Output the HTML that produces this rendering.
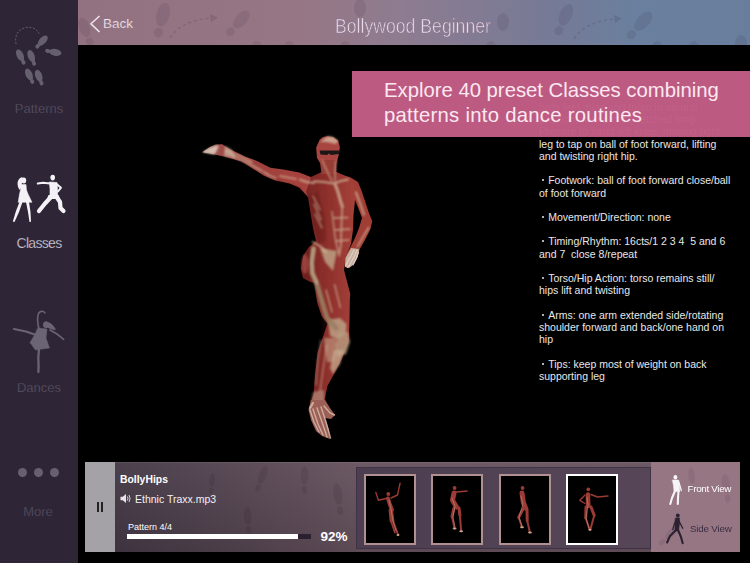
<!DOCTYPE html>
<html><head><meta charset="utf-8">
<style>
*{margin:0;padding:0;box-sizing:border-box}
html,body{width:750px;height:563px;overflow:hidden;background:#000;font-family:"Liberation Sans",sans-serif}
.abs{position:absolute}
#side{left:0;top:0;width:78px;height:563px;background:#2e2536}
.lbl{position:absolute;left:0;width:78px;text-align:center;font-size:13px;color:#5c5566;white-space:nowrap;-webkit-text-stroke:0.25px #2e2536}
#hdr{left:78px;top:0;width:672px;height:45px;overflow:hidden;background:linear-gradient(90deg,rgb(146,114,129) 0%,rgb(150,118,132) 33%,rgb(142,124,144) 48%,rgb(118,122,150) 70%,rgb(106,128,158) 83%,rgb(104,126,156) 100%)}
#banner{left:352px;top:71px;width:398px;height:66px;background:rgba(193,92,133,0.975)}
.bt{position:absolute;left:32px;font-size:20.3px;color:#fde8f0;white-space:nowrap}
#desc{left:539px;top:0;width:211px;font-size:10.5px;color:#e8e8e8}
.dl{position:absolute;left:0;white-space:nowrap}
.bu{display:inline-block;width:2.2px;height:2.2px;border-radius:1px;background:#e8e8e8;margin:0 4px 0 3px;vertical-align:3px}
#panel{left:85px;top:462px;width:655px;height:90px;background:linear-gradient(180deg,rgba(255,255,255,0.04),rgba(0,0,0,0.1)),linear-gradient(90deg,rgb(68,57,70) 4.6%,rgb(86,70,82) 25.2%,rgb(102,82,94) 41.4%,rgb(102,82,94) 100%)}
#pause{left:0;top:0;width:30px;height:90px;background:rgb(164,162,166)}
#strip{left:271px;top:5px;width:295px;height:82px;background:linear-gradient(90deg,rgb(76,62,80),rgb(86,70,88));border:1px solid #3e3244}
.th{position:absolute;top:6px;width:52px;height:71px;background:#000;border:2px solid #b09090}
#rp{left:566px;top:0;width:89px;height:90px;background:rgb(151,118,131)}
</style></head><body>
<div id="side" class="abs"><svg class="abs" style="left:0;top:0" width="78" height="563" viewBox="0 0 78 563"><g fill="#66606e"><g transform="translate(20.9,57) rotate(-25.7) scale(1.0)"><ellipse cx="0" cy="-2" rx="3.4" ry="6.2"/><path d="M-1.6,3 L1.6,3 L1.4,5.5 L-1.4,5.5 Z"/><ellipse cx="0" cy="6" rx="2" ry="2.2"/></g><g transform="translate(31.9,57.9) rotate(-21.4) scale(1.0)"><ellipse cx="0" cy="-2" rx="3.4" ry="6.2"/><path d="M-1.6,3 L1.6,3 L1.4,5.5 L-1.4,5.5 Z"/><ellipse cx="0" cy="6" rx="2" ry="2.2"/></g><g transform="translate(29.75,76.2) rotate(-24.3) scale(1.0)"><ellipse cx="0" cy="-2" rx="3.4" ry="6.2"/><path d="M-1.6,3 L1.6,3 L1.4,5.5 L-1.4,5.5 Z"/><ellipse cx="0" cy="6" rx="2" ry="2.2"/></g><g transform="translate(39.4,77.6) rotate(-20.9) scale(1.0)"><ellipse cx="0" cy="-2" rx="3.4" ry="6.2"/><path d="M-1.6,3 L1.6,3 L1.4,5.5 L-1.4,5.5 Z"/><ellipse cx="0" cy="6" rx="2" ry="2.2"/></g><g transform="translate(41.5,42) rotate(42.9) scale(1.0)"><ellipse cx="0" cy="-2" rx="3.4" ry="6.2"/><path d="M-1.6,3 L1.6,3 L1.4,5.5 L-1.4,5.5 Z"/><ellipse cx="0" cy="6" rx="2" ry="2.2"/></g><g transform="translate(53.25,52) rotate(100.6) scale(1.0)"><ellipse cx="0" cy="-2" rx="3.4" ry="6.2"/><path d="M-1.6,3 L1.6,3 L1.4,5.5 L-1.4,5.5 Z"/><ellipse cx="0" cy="6" rx="2" ry="2.2"/></g></g><path d="M16.2,44.2 C14,36 18,29 26.1,27.5 C32,26.5 37,29 39.2,33.7" fill="none" stroke="#66606e" stroke-width="1" stroke-dasharray="2 1.6"/><g fill="#f4f2f6" stroke="#f4f2f6" stroke-linecap="round" stroke-linejoin="round">
<ellipse cx="23.8" cy="180.5" rx="2.4" ry="3" stroke="none"/>
<path stroke="none" d="M22.5,177 C19.5,177.5 18,180 17.6,182.5 C17.3,185 18.2,188 19.5,190 L21.5,187 L22,182 Z"/>
<path stroke-width="0.5" d="M21,184.5 L26,184.5 L26.5,190 L28,194 L32,202.3 L18.2,202.3 L19.5,194 L20.5,190 Z"/>
<path stroke="none" d="M19.5,202 L22.5,202 L19,212 L14.5,222 L12.8,221.5 L16,211 Z"/>
<path stroke="none" d="M26,202 L29,202 L30.5,212 L31,221.8 L29.5,222 L28,212 Z"/>
<ellipse cx="52.7" cy="177.6" rx="2.3" ry="2.8" stroke="none"/>
<path stroke-width="0.6" d="M49.5,182 L57,182.5 L57.5,189 L57.5,196.5 L50,196.5 L50,189 Z"/>
<path stroke-width="2" fill="none" d="M50,183.5 L43,182.8 L37.8,183.5 M56.5,184 L61,187.7 L58,191.5"/>
<path stroke-width="4.2" fill="none" d="M52,196 L45,203.5 L39,211 M56,196 L60,202 L60.5,208 L63.5,211"/><path stroke="none" d="M48.5,195 L58.5,195 L60,199 L47,199 Z"/>
</g><g fill="#6a6474" stroke="#6a6474" stroke-linecap="round" stroke-linejoin="round">
<path fill="none" stroke-width="1.6" d="M44.9,312.8 C43,310.5 40,311 38.5,313.5 C37,317 37.5,323 39.1,329.6"/>
<ellipse cx="46" cy="324.8" rx="3" ry="3.3" stroke="none"/>
<path stroke="none" d="M45,321.5 C50,322 54,325 56,330 C52,330 49,328 46,327 Z"/>
<path fill="none" stroke-width="1.6" d="M50,330 L57,334 L63.7,339.3"/>
<path fill="none" stroke-width="2.2" d="M36,335 L26,331.5 L14,329"/>
<path stroke-width="0.5" d="M38,328 L47,329 L46,338 L49.5,348 L42,349 L35.5,350 L30,342.6 L34,336 Z"/>
<path fill="none" stroke-width="2.3" d="M39,348 L38.3,358 L38.6,366 L38.4,372"/>
</g></svg>
  <div class="lbl" style="top:101px">Patterns</div>
  <div class="lbl" style="top:235px;color:#dcd8e0;font-size:14px;letter-spacing:-0.7px">Classes</div>
  <div class="lbl" style="top:380px">Dances</div>
  <div class="lbl" style="top:504px;left:-1px;color:#5a5264">More</div>
  <div class="abs" style="left:18px;top:468px;width:9px;height:9px;border-radius:50%;background:#686070"></div>
  <div class="abs" style="left:34px;top:468px;width:9px;height:9px;border-radius:50%;background:#686070"></div>
  <div class="abs" style="left:50px;top:468px;width:9px;height:9px;border-radius:50%;background:#686070"></div>
</div>
<div id="hdr" class="abs"><svg class="abs" style="left:-78px;top:0" width="750" height="45" viewBox="0 0 750 45"><g fill="rgba(30,10,40,0.09)"><g transform="translate(161.5,20.5) rotate(14.4) scale(1.000)"><ellipse cx="0" cy="-6" rx="6.5" ry="12"/><ellipse cx="0" cy="12.5" rx="4.5" ry="5"/></g><g transform="translate(237.8,23.5) rotate(41) scale(0.889)"><ellipse cx="0" cy="-6" rx="6.5" ry="12"/><ellipse cx="0" cy="12.5" rx="4.5" ry="5"/></g><g transform="translate(563.6,20) rotate(24.2) scale(0.944)"><ellipse cx="0" cy="-6" rx="6.5" ry="12"/><ellipse cx="0" cy="12.5" rx="4.5" ry="5"/></g><g transform="translate(639.4,25.5) rotate(41.4) scale(0.972)"><ellipse cx="0" cy="-6" rx="6.5" ry="12"/><ellipse cx="0" cy="12.5" rx="4.5" ry="5"/></g><g transform="translate(86,32) rotate(-20) scale(0.833)"><ellipse cx="0" cy="-6" rx="6.5" ry="12"/><ellipse cx="0" cy="12.5" rx="4.5" ry="5"/></g><ellipse cx="257" cy="50" rx="6" ry="9"/><ellipse cx="289" cy="50" rx="6" ry="9"/><ellipse cx="345" cy="50" rx="6" ry="9"/><ellipse cx="491" cy="50" rx="6" ry="9"/><ellipse cx="657" cy="50" rx="6" ry="9"/><ellipse cx="694" cy="50" rx="6" ry="9"/><ellipse cx="741" cy="44" rx="6" ry="9"/><ellipse cx="360" cy="8" rx="6" ry="9"/><ellipse cx="503" cy="22" rx="6" ry="9"/></g><g fill="none" stroke="rgba(30,10,40,0.12)" stroke-width="1.6" stroke-dasharray="3 3"><path d="M170,38 Q182,20 212,18"/><path d="M574,38.7 Q586,21 616,19"/></g><g fill="rgba(30,10,40,0.12)"><path d="M210,14 L218,17.6 L211,22 Z"/><path d="M614,15 L622,18.6 L615,23 Z"/></g></svg>
  <svg class="abs" style="left:12px;top:15px" width="12" height="18"><path d="M9.5 1 L1 8.8 L9.5 17" fill="none" stroke="#f2e4ec" stroke-width="1.5"/></svg>
  <div class="abs" style="left:25px;top:16px;font-size:13.5px;color:#f6eaf0;-webkit-text-stroke:0.2px #927080">Back</div>
  <div class="abs" style="left:257px;top:14px;font-size:21px;color:#eadcea;transform:scaleX(0.84);transform-origin:0 0;white-space:nowrap;-webkit-text-stroke:0.6px #86728a">Bollywood Beginner</div>
</div>

<svg id="fig" class="abs" style="left:0;top:0" width="750" height="563" viewBox="0 0 750 563">
<defs>
<filter id="soft" x="-10%" y="-10%" width="120%" height="120%"><feGaussianBlur stdDeviation="0.6"/></filter>
<filter id="soft3" x="-10%" y="-10%" width="120%" height="120%"><feGaussianBlur stdDeviation="0.8"/></filter>
<filter id="soft2" x="-20%" y="-20%" width="140%" height="140%"><feGaussianBlur stdDeviation="1.1"/></filter>
<linearGradient id="gArm" x1="202" y1="0" x2="320" y2="0" gradientUnits="userSpaceOnUse"><stop offset="0" stop-color="#c8b0a4"/><stop offset="0.12" stop-color="#a0504c"/><stop offset="0.3" stop-color="#98403c"/><stop offset="0.7" stop-color="#a4423c"/><stop offset="1" stop-color="#a8443e"/></linearGradient>
<linearGradient id="gTorso" x1="300" y1="0" x2="356" y2="0" gradientUnits="userSpaceOnUse"><stop offset="0" stop-color="#742422"/><stop offset="0.5" stop-color="#8e302c"/><stop offset="1" stop-color="#a6423a"/></linearGradient>
</defs>
<g filter="url(#soft)">
<!-- left arm -->
<path fill="url(#gArm)" d="M202.4,152.3 L210,147 L216,144.6 L222.4,144.3 L228.8,148.6 L244.8,156.6 L256,160.6 L270.4,167.8 L283.2,169.4 L299.2,172.6 L312,177.4 L322,176 L318,198 L308,197 L299.2,187.5 L289.6,183.5 L275.2,180.6 L264,175.8 L241.6,161.4 L224,156.6 L209.6,153.4 Z"/>
<!-- right arm -->
<path fill="#a03c36" d="M346,176 L350.7,177.6 L358,182 L362,192 L369,213.3 L372.3,221.3 L370.3,229.3 L365,240 L359.7,249.3 L357,258.7 L351,266.7 L346.3,268 L345,265.3 L345.7,256 L350,248 L355,238 L359,228 L362,218 L359,210 L355,200 L350,198 Z"/>
<!-- torso + legs -->

<path fill="url(#gTorso)" d="M321.6,172 L336.3,172 L346,176 L352,180 L356,192 L355,200 L353.5,215 L353,230 L351,244 L346,257.3 L344,270 L350.3,294 L349.8,300 L349.5,320 L348.9,341 L342,358.6 L334,374 L327.4,386 L323.5,405 L310,404 L313.7,393.8 L315,375 L317.6,352.8 L323.5,335.2 L327.4,323.5 L321.6,316 L317,302 L314.4,282.7 L310.4,282 L303,278 L300.8,268.4 L303,256 L309,247 L316,241 L313,228 L308,197 L306,192 L311,177 Z"/>
<path fill="#c8b0a0" d="M351,248 L359,249 L358,256 L354,264 L349,268 L345,266.5 L345.5,258 Z"/>
<g fill="none" stroke="#e0d0c4" stroke-linecap="round" stroke-width="1.1">
<path d="M357,250 L354,257 L350.5,263.5 L347.5,267.5 M354,250 L350.5,257 L347.5,262 L345.5,266 M358.5,252 L356.5,258 L353,265"/>
</g>
<!-- head -->
<path fill="#a84440" d="M327.5,136.3 L333,137 L338.2,140.7 L339.8,147 L339.2,152.5 L338,158 L336.3,163.2 L332,166.5 L328.4,167.6 L323,165.5 L319.6,162.2 L317,158 L316.7,154.4 L316.2,147.6 L319.6,139.8 L323,137 Z"/>
<path fill="#983c36" d="M319.6,160 L336.3,160 L336.3,174 L321.6,174 Z"/>
</g>
<g filter="url(#soft2)" fill="#501010" opacity="0.28">
<path d="M308,196 L318,192 L324,215 L326,240 L318,246 L313,228 Z"/>
<path d="M264,175.8 L275.2,180.6 L289.6,183.5 L299.2,187.5 L308,197 L300,190 L285,182 L270,176 Z"/>
<path d="M301,265 L306,252 L312,246 L314,270 L312,282 L303,278 Z"/>
<path d="M317,302 L321.6,316 L327.4,323.5 L323.5,335.2 L317.6,352.8 L315,375 L313.7,393.8 L318,380 L322,345 L322,320 Z"/>
</g>
<g filter="url(#soft2)">
<!-- tan shapes -->
<path fill="#bca084" opacity="0.85" d="M320,248 L337,251 L333,271 L325,262 Z"/>
<path fill="#d4c0b0" d="M202.4,152.3 L210,148 L216,145.5 L219,146 L216,152 L214,154.4 L209.6,153.4 Z"/><path fill="#c8aa98" opacity="0.8" d="M225,146 L232,150 L236,158 L229,157 L224,156 Z"/>

<path fill="#d4b8a0" opacity="0.8" d="M320,142 L327.5,136.3 L333,137 L338.2,140.7 L336,144 L327,142 Z"/>
</g>
<g filter="url(#soft2)">
<path fill="#bca084" opacity="0.85" d="M328,320 L340,318 L346.5,324 L346,334 L338,339 L330,336 Z"/>
<path fill="#b89c80" opacity="0.8" d="M338,333 L348,332 L350,342 L346,354 L338,357 L336,345 Z"/>
<path fill="#c4a48a" opacity="0.6" d="M324,338 L336,338 L338,350 L334,362 L327,362 L325,350 Z"/>
<path fill="#c6ac90" opacity="0.75" d="M334,350 L344,350 L340,364 L333,374 L330,368 Z"/>
<path fill="#c0a08c" opacity="0.6" d="M313,392 L324,390 L324.5,403 L311,403 Z"/>
</g>
<g fill="none" stroke="#d0b69a" stroke-linecap="round" stroke-linejoin="round" opacity="0.8" filter="url(#soft3)">
<path stroke-width="2" d="M314.4,181.2 L324,182 L333.6,183.6 L341,181 L348,179.6"/>
<path stroke-width="1.3" d="M322,160 L327,171 L332,181 M336,161 L335,172 L335,181"/>
<path stroke-width="3" d="M335.2,184.4 L338,192 L340.8,202 L342.4,206.8"/>
<path stroke-width="1.6" d="M342.2,207 L341.5,225 L341,245 L339,256"/>
<path stroke-width="1.3" d="M334,218 L348,217.5 M335,230 L350,229 M336,241 L349,240"/>
<path stroke-width="1.3" d="M332,211.5 L335,237 L338.4,253"/>
<path stroke-width="1.2" d="M313,196 L320,210 M314,204 L321,220 M315,214 L322,228"/>
<path stroke-width="2" d="M312.8,242 L320.8,246.7 L326,252"/>
<path stroke-width="2" d="M356,192.4 L360,203 L364,214.7"/>
<path stroke-width="1.6" d="M368.7,227.5 L363,237 L357.5,246.7"/>

<path stroke-width="1" d="M321,340 L318,360 L316,385 M327,345 L323,370 L320,392"/>

<path stroke-width="2" d="M300,179.6 L306.4,182 L314,183"/>
<path stroke-width="1.3" d="M334.6,284.6 L340.4,307.7 M326,290 L332,312"/>
<path stroke-width="1.6" d="M226,151 L240,156 L252,162 M232,156 L248,163 L262,171 M264,172 L270,176 L276,178 M280,176 L296,179"/>
</g>
<path fill="none" stroke="#9a7e62" stroke-width="5" stroke-linecap="round" opacity="0.9" filter="url(#soft2)" d="M313.5,249 L311.5,262 L312,273 L317,284 L321,298 L327,318 L336,328"/>
<path fill="none" stroke="#c4aa8c" stroke-width="3" stroke-linecap="round" opacity="0.75" filter="url(#soft2)" d="M313.5,248 L311.8,262 L312.5,273 L317,283"/>
<ellipse cx="305" cy="264" rx="3.5" ry="10" fill="#d06a60" opacity="0.45" filter="url(#soft2)"/>
<!-- sunglasses -->
<path fill="#1e1616" filter="url(#soft)" d="M319.6,150.5 L339.2,150.5 L339,154 L331,155 L329,153.5 L327,155 L320.5,154.5 Z"/>
<!-- foot -->
<g filter="url(#soft)">
<path fill="#9c5e56" d="M311,400 L308.5,409.8 L311,420 L316,431 L322,436 L330,439 L329,430 L325,418 L331,419 L335,415 L330,408 L325,400 Z"/>
<g fill="none" stroke="#d8c0b0" stroke-linecap="round" opacity="0.8">
<path stroke-width="1.4" d="M310,410 L314,422 L319,432 M313,409 L318,424 L323,435 M317,408 L322,422 L327,437 M321,407 L326,422 L330.5,438 M324,406 L330,413 L334.5,415"/>
<path stroke-width="2.2" d="M310,408 L313,403"/>
</g></g>
</svg>
<div id="desc" class="abs">
  <div class="dl" style="top:101px">both feet, hips and torso in neutral</div>
  <div class="dl" style="top:113px">position, with arms stretched long.</div>
  <div class="dl" style="top:125px">Prepare to bend left knee, moving right</div>
  <div class="dl" style="top:138px">leg to tap on ball of foot forward, lifting</div>
  <div class="dl" style="top:150px">and twisting right hip.</div>
  <div class="dl" style="top:174px"><i class="bu"></i>Footwork: ball of foot forward close/ball</div>
  <div class="dl" style="top:187px">of foot forward</div>
  <div class="dl" style="top:211px"><i class="bu"></i>Movement/Direction: none</div>
  <div class="dl" style="top:235px"><i class="bu"></i>Timing/Rhythm: 16cts/1 2 3 4&nbsp; 5 and 6</div>
  <div class="dl" style="top:248px">and 7&nbsp; close 8/repeat</div>
  <div class="dl" style="top:272px"><i class="bu"></i>Torso/Hip Action: torso remains still/</div>
  <div class="dl" style="top:284px">hips lift and twisting</div>
  <div class="dl" style="top:309px"><i class="bu"></i>Arms: one arm extended side/rotating</div>
  <div class="dl" style="top:321px">shoulder forward and back/one hand on</div>
  <div class="dl" style="top:333px">hip</div>
  <div class="dl" style="top:358px"><i class="bu"></i>Tips: keep most of weight on back</div>
  <div class="dl" style="top:370px">supporting leg</div>
</div>

<div id="banner" class="abs">
  <div class="bt" style="top:8px">Explore 40 preset Classes combining</div>
  <div class="bt" style="top:33px;letter-spacing:0.28px">patterns into dance routines</div>
</div>

<div id="panel" class="abs">
  <div class="abs" style="left:0;top:0;width:655px;height:1px;background:rgba(255,255,255,0.08)"></div>
  <div id="pause" class="abs">
    <div class="abs" style="left:12px;top:40px;width:2px;height:10px;background:#222"></div>
    <div class="abs" style="left:16px;top:40px;width:2px;height:10px;background:#222"></div>
  </div>
  <div class="abs" style="left:35px;top:11.5px;font-size:10.4px;font-weight:bold;color:#fff">BollyHips</div>
  <svg class="abs" style="left:34.5px;top:30.5px" width="12" height="11" viewBox="0 0 13 12"><path d="M0.5,4 L3,4 L6.5,1 L6.5,11 L3,8 L0.5,8 Z" fill="#e8e4ea"/><path d="M8,3.8 Q9.3,6 8,8.2 M9.8,2.2 Q12,6 9.8,9.8" fill="none" stroke="#e8e4ea" stroke-width="1"/></svg>
  <div class="abs" style="left:50px;top:31px;font-size:10.5px;color:#f4f0f4">Ethnic Traxx.mp3</div>
  <div class="abs" style="left:43px;top:59.5px;font-size:9px;color:#fff">Pattern 4/4</div>
  <div class="abs" style="left:42px;top:72px;width:184px;height:5px;background:#2a2030"></div>
  <div class="abs" style="left:42px;top:72px;width:171px;height:5px;background:#fff"></div>
  <div class="abs" style="left:235.5px;top:66.5px;font-size:13.5px;font-weight:bold;color:#fff">92%</div>
  <div id="strip" class="abs">
    <div class="th" style="left:7px"></div>
    <div class="th" style="left:74px"></div>
    <div class="th" style="left:142px"></div>
    <div class="th" style="left:209px;border-color:#fff"></div>
  </div>
  <div id="rp" class="abs"></div>
</div>
<svg class="abs" style="left:0;top:0;pointer-events:none" width="750" height="563" viewBox="0 0 750 563"><g fill="rgba(20,5,25,0.09)"><g transform="translate(261.2,479.2) rotate(20.4) scale(0.583,0.758)"><ellipse cx="0" cy="-6" rx="6.5" ry="12"/><ellipse cx="0" cy="12.5" rx="4.5" ry="5"/></g><g transform="translate(304.5,480.2) rotate(0.0) scale(0.590,0.767)"><ellipse cx="0" cy="-6" rx="6.5" ry="12"/><ellipse cx="0" cy="12.5" rx="4.5" ry="5"/></g><g transform="translate(211.8,483.4) rotate(5.7) scale(0.455,0.592)"><ellipse cx="0" cy="-6" rx="6.5" ry="12"/><ellipse cx="0" cy="12.5" rx="4.5" ry="5"/></g><g transform="translate(248.0,520.5) rotate(-4.2) scale(0.579,0.752)"><ellipse cx="0" cy="-6" rx="6.5" ry="12"/><ellipse cx="0" cy="12.5" rx="4.5" ry="5"/></g><g transform="translate(338.6,499.5) rotate(-7.7) scale(0.690,0.897)"><ellipse cx="0" cy="-6" rx="6.5" ry="12"/><ellipse cx="0" cy="12.5" rx="4.5" ry="5"/></g></g><g fill="rgba(20,5,25,0.07)"><g transform="translate(692.0,480.0) rotate(-4.8) scale(0.515,0.669)"><ellipse cx="0" cy="-6" rx="6.5" ry="12"/><ellipse cx="0" cy="12.5" rx="4.5" ry="5"/></g><g transform="translate(726.4,488.5) rotate(-7.5) scale(0.625,0.812)"><ellipse cx="0" cy="-6" rx="6.5" ry="12"/><ellipse cx="0" cy="12.5" rx="4.5" ry="5"/></g><g transform="translate(668.7,535.5) rotate(45.6) scale(0.580,0.754)"><ellipse cx="0" cy="-6" rx="6.5" ry="12"/><ellipse cx="0" cy="12.5" rx="4.5" ry="5"/></g></g></svg>
<svg class="abs" style="left:0;top:0" width="750" height="563" viewBox="0 0 750 563">
<g fill="none" stroke="#9a3a34" stroke-linecap="round" stroke-linejoin="round" filter="url(#softT)">
 <!-- thumb1 -->
 <circle cx="388.3" cy="494" r="1.9" fill="#9a3a34" stroke="none"/>
 <path stroke-width="1.4" d="M386,498.5 L378.4,500.3 L375.8,492.4 M391,498 L397.5,495 L400.1,483.2"/>
 <path stroke-width="4" d="M388,498.5 L390,505 L392,510"/>
 <path stroke-width="2.8" d="M391.5,510 L393,520.6 M390,510 L391,521"/>
 <path stroke-width="1.8" d="M393,520.6 L398.2,535.1 M391,521 L394.9,532.5"/>
 <!-- thumb2 -->
 <circle cx="454.6" cy="488" r="1.9" fill="#9a3a34" stroke="none"/>
 <path stroke-width="1.5" d="M456,492 L462,491.5 L467.1,491.1"/>
 <path stroke-width="5" d="M454,493 L452.5,500.3 L456.5,507"/>
 <path stroke-width="3" d="M454,508 L452,516.7 M459,508 L459.9,515.4"/>
 <path stroke-width="2" d="M452,516.7 L454.6,528.5 M459.9,515.4 L461.2,531.2"/>
 <!-- thumb3 -->
 <circle cx="522.6" cy="488" r="1.9" fill="#9a3a34" stroke="none"/>
 <path stroke-width="5" d="M522,493 L523.3,502.2 L525.5,508"/>
 <path stroke-width="3" d="M523,509 L518.7,517.4 M527,509 L527.2,520.6"/>
 <path stroke-width="2" d="M518.7,517.4 L522,527.2 M527.2,520.6 L529.9,532.5"/>
 <!-- thumb4 -->
 <circle cx="588.3" cy="489.3" r="1.9" fill="#9a3a34" stroke="none"/>
 <path stroke-width="1.4" d="M591,494.5 L597.5,497 L608,496 M585,495 L579.8,500.3 L585,503.5"/>
 <path stroke-width="4.6" d="M588,494.5 L588,500 L588.3,506"/>
 <path stroke-width="3" d="M586,507 L585.7,518 M591,507 L594.2,515.4"/>
 <path stroke-width="2" d="M585.7,518 L589.6,529.8 M594.2,515.4 L590.3,529.8"/>
</g>
<g fill="none" stroke="#c8a890" stroke-linecap="round" opacity="0.55" stroke-width="0.9" filter="url(#softT)">
 <path d="M389,500 L391,509 L393,521 L396,531 M452,498 L455,506 L453,517 L455,527 M521,496 L523,504 L519,517 L522,526 M587,497 L588,505 L586,518 L589,528"/>
</g>
<g fill="#d8c0a8" opacity="0.8">
 <ellipse cx="398" cy="535" rx="1.5" ry="1"/><ellipse cx="454.6" cy="528.5" rx="2" ry="1"/><ellipse cx="461.2" cy="531.2" rx="2" ry="1"/>
 <ellipse cx="522" cy="527.2" rx="2" ry="1"/><ellipse cx="530" cy="532.5" rx="2" ry="1"/><ellipse cx="590" cy="529.8" rx="1.6" ry="1"/>
</g>
<defs><filter id="softT" x="-10%" y="-10%" width="120%" height="120%"><feGaussianBlur stdDeviation="0.4"/></filter></defs>
<!-- front view -->
<g fill="#f6f4f6" stroke="#f6f4f6" stroke-linecap="round" stroke-linejoin="round">
 <ellipse cx="675.4" cy="477.3" rx="1.9" ry="2.2" stroke="none"/>
 <path stroke-width="0.5" d="M672.5,480 L678.5,480 L679.5,486 L679.8,491.5 L674,491.5 L673.5,486 Z"/>
 <path stroke-width="1.3" fill="none" d="M678.5,481 L680,486 L681.3,490.6"/>
 <path stroke-width="2.1" fill="none" d="M675,491 L672,498 L670.3,504 M678.5,491 L678,498 L677.8,504"/>
</g>
<!-- side view -->
<g fill="#2c2232" stroke="#2c2232" stroke-linecap="round" stroke-linejoin="round">
 <ellipse cx="677.8" cy="515.6" rx="1.9" ry="2.1" stroke="none"/>
 <path stroke-width="0.5" d="M675.5,518 L679.5,518 L679.5,524 L678.5,531 L675,531 L675,524 Z"/>
 <path stroke-width="1.3" fill="none" d="M676,520 L674,525 L672.8,529.7 M679,521 L681,525 L682.7,528.3"/>
 <path stroke-width="2.1" fill="none" d="M676,530 L670,536 L667.1,542.5 M678,530 L681,537 L682.7,543.2"/>
</g>
</svg>
<div class="abs" style="left:687.5px;top:482.5px;font-size:9.8px;letter-spacing:-0.3px;color:#fff;white-space:nowrap">Front View</div>
<div class="abs" style="left:690px;top:522.5px;font-size:9.8px;letter-spacing:-0.2px;color:#3a2e44;white-space:nowrap">Side View</div>
</body></html>
